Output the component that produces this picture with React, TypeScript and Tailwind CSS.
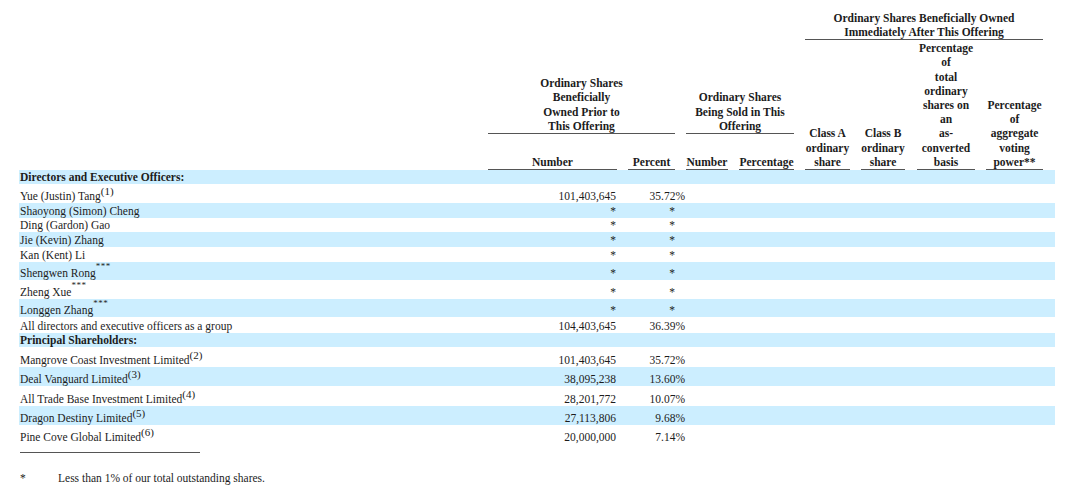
import React from 'react';

type Row = {
  label: string;
  sup?: string;
  stars?: boolean;
  bold?: boolean;
  blue?: boolean;
  num?: string;
  pct?: string;
  h: string;
};

const rows: Row[] = [
  { label: 'Directors and Executive Officers:', bold: true, blue: true, h: 'h-[14px]' },
  { label: 'Yue (Justin) Tang', sup: '(1)', num: '101,403,645', pct: '35.72%', h: 'h-[19px]' },
  { label: 'Shaoyong (Simon) Cheng', num: '*', pct: '*', blue: true, h: 'h-[15px]' },
  { label: 'Ding (Gardon) Gao', num: '*', pct: '*', h: 'h-[14px]' },
  { label: 'Jie (Kevin) Zhang', num: '*', pct: '*', blue: true, h: 'h-[15px]' },
  { label: 'Kan (Kent) Li', num: '*', pct: '*', h: 'h-[15px]' },
  { label: 'Shengwen Rong', stars: true, num: '*', pct: '*', blue: true, h: 'h-[18px]' },
  { label: 'Zheng Xue', stars: true, num: '*', pct: '*', h: 'h-[19px]' },
  { label: 'Longgen Zhang', stars: true, num: '*', pct: '*', blue: true, h: 'h-[18px]' },
  { label: 'All directors and executive officers as a group', num: '104,403,645', pct: '36.39%', h: 'h-[16px]' },
  { label: 'Principal Shareholders:', bold: true, blue: true, h: 'h-[14px]' },
  { label: 'Mangrove Coast Investment Limited', sup: '(2)', num: '101,403,645', pct: '35.72%', h: 'h-[20px]' },
  { label: 'Deal Vanguard Limited', sup: '(3)', num: '38,095,238', pct: '13.60%', blue: true, h: 'h-[19px]' },
  { label: 'All Trade Base Investment Limited', sup: '(4)', num: '28,201,772', pct: '10.07%', h: 'h-[20px]' },
  { label: 'Dragon Destiny Limited', sup: '(5)', num: '27,113,806', pct: '9.68%', blue: true, h: 'h-[19px]' },
  { label: 'Pine Cove Global Limited', sup: '(6)', num: '20,000,000', pct: '7.14%', h: 'h-[19px]' },
];

const widths = [469, 129, 11, 47, 11, 42, 11, 55, 11, 45, 11, 44, 12, 58, 11, 57, 12];

const line = 'border-b border-[#555] align-bottom font-bold p-0';

const App = () => {
  return (
    <div className="min-h-screen bg-white text-[#1c1c1c] font-['Liberation_Serif','Times_New_Roman',serif] text-[11.5px] leading-[14px]">
      <table className="ml-[19px] w-[1036px] table-fixed border-separate border-spacing-0">
        <colgroup>
          {widths.map((w, i) => (
            <col key={i} style={{ width: w }} />
          ))}
        </colgroup>
        <thead className="font-bold text-center leading-[14.2px]">
          <tr className="h-[40px]">
            <td colSpan={9} className="p-0"></td>
            <th colSpan={7} className={line}>
              Ordinary Shares Beneficially Owned
              <br />
              Immediately After This Offering
            </th>
            <td className="p-0"></td>
          </tr>
          <tr className="h-[94px]">
            <td rowSpan={2} className="p-0"></td>
            <th colSpan={3} className={line}>
              Ordinary Shares
              <br />
              Beneficially
              <br />
              Owned Prior to
              <br />
              This Offering
            </th>
            <td rowSpan={2} className="p-0"></td>
            <th colSpan={3} className={line}>
              Ordinary Shares
              <br />
              Being Sold in This
              <br />
              Offering
            </th>
            <td rowSpan={2} className="p-0"></td>
            <th rowSpan={2} className={line}>
              Class A
              <br />
              ordinary
              <br />
              share
            </th>
            <td rowSpan={2} className="p-0"></td>
            <th rowSpan={2} className={line}>
              Class B
              <br />
              ordinary
              <br />
              share
            </th>
            <td rowSpan={2} className="p-0"></td>
            <th rowSpan={2} className={line}>
              Percentage
              <br />
              of
              <br />
              total
              <br />
              ordinary
              <br />
              shares on
              <br />
              an
              <br />
              as-
              <br />
              converted
              <br />
              basis
            </th>
            <td rowSpan={2} className="p-0"></td>
            <th rowSpan={2} className={line}>
              Percentage
              <br />
              of
              <br />
              aggregate
              <br />
              voting
              <br />
              power**
            </th>
            <td rowSpan={2} className="p-0"></td>
          </tr>
          <tr className="h-[36px]">
            <th className={line}>Number</th>
            <td className="p-0"></td>
            <th className={line}>Percent</th>
            <th className={line}>Number</th>
            <td className="p-0"></td>
            <th className={`${line} whitespace-nowrap`}>Percentage</th>
          </tr>
        </thead>
        <tbody>
          {rows.map((r, i) => (
            <tr key={i} className={`${r.h} ${r.blue ? 'bg-[#cceeff]' : ''}`}>
              <td className={`p-0 pl-[1px] align-bottom whitespace-nowrap ${r.bold ? 'font-bold' : ''}`}>
                {r.label}
                {r.sup && <span className="text-[11px] leading-[0] align-[5px]">{r.sup}</span>}
                {r.stars && <span className="text-[9px] tracking-[0.5px] leading-[0] align-[8px]">***</span>}
              </td>
              <td className="p-0 align-bottom text-right pr-[1px]">{r.num}</td>
              <td className="p-0"></td>
              <td colSpan={2} className={`p-0 align-bottom text-right ${r.pct === '*' ? 'pr-[11px]' : 'pr-[1px]'}`}>
                {r.pct}
              </td>
              <td colSpan={12} className="p-0"></td>
            </tr>
          ))}
        </tbody>
      </table>

      <div className="ml-[20px] mt-[8px] w-[180px] border-t border-[#555]"></div>

      <div className="ml-[20px] mt-[18px] flex">
        <span className="w-[38px]">*</span>
        <span>Less than 1% of our total outstanding shares.</span>
      </div>
    </div>
  );
};

export default App;
